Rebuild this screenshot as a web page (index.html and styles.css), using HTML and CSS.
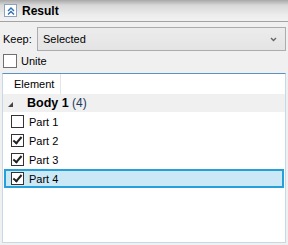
FILE: index.html
```html
<!DOCTYPE html>
<html lang="en">

<head>
    <meta charset="UTF-8">
    <title>Result</title>
    <link rel="stylesheet" href="styles.css">
</head>

<body>
    <div class="panel">
        <div class="panel-head">
            <span class="collapse-btn">
                <svg width="10" height="10" viewBox="0 0 10 10">
                    <path d="M2 5 L5 2 L8 5 M2 8.5 L5 5.5 L8 8.5" fill="none" stroke="#2d6db5" stroke-width="1.4" />
                </svg>
            </span>
            <span class="panel-title">Result</span>
        </div>

        <div class="keep-row">
            <label for="keep">Keep:</label>
            <div class="combo" id="keep">
                <span>Selected</span>
                <svg class="combo-arrow" width="7" height="5" viewBox="0 0 7 5">
                    <path d="M1 1 L3.5 3.5 L6 1" fill="none" stroke="#666" stroke-width="1.4" />
                </svg>
            </div>
        </div>

        <div class="unite-row">
            <span class="check light"></span>
            <span>Unite</span>
        </div>

        <div class="tree">
            <div class="tree-head">
                <div class="col">Element</div>
            </div>
            <div class="group">
                <span class="expander"></span>
                <b>Body 1</b>&nbsp;<span class="count">(4)</span>
            </div>
            <div class="item">
                <span class="check"></span>
                <span>Part 1</span>
            </div>
            <div class="item">
                <span class="check on"></span>
                <span>Part 2</span>
            </div>
            <div class="item">
                <span class="check on"></span>
                <span>Part 3</span>
            </div>
            <div class="item selected">
                <span class="check on"></span>
                <span>Part 4</span>
            </div>
        </div>
    </div>
</body>

</html>
```

FILE: styles.css
```css
body {
    margin: 0;
    background: #f0f0f0;
    font-family: "Liberation Sans", Arial, sans-serif;
    font-size: 11px;
    color: #000;
}

.panel {
    width: 288px;
    height: 245px;
    display: flex;
    flex-direction: column;
    overflow: hidden;
}

.panel-head {
    height: 21px;
    border-bottom: 1px solid #a3a3a3;
    background: linear-gradient(#a8a8a8, #d8d8d8 25%, #ececec 70%, #f2f2f2);
    display: flex;
    align-items: center;
    padding-left: 4px;
}

.collapse-btn {
    width: 11px;
    height: 11px;
    border: 1px solid #8da3bd;
    background: #fff;
    display: flex;
    align-items: center;
    justify-content: center;
}

.panel-title {
    font-weight: bold;
    font-size: 12px;
    margin-left: 5px;
}

.keep-row {
    display: flex;
    align-items: center;
    margin-top: 5px;
    padding-left: 3px;
    padding-right: 2px;
}

.keep-row label {
    width: 34px;
}

.combo {
    flex: 1;
    height: 22px;
    border: 1px solid #acacac;
    background: linear-gradient(#ececec, #e4e4e4);
    display: flex;
    align-items: center;
    padding-left: 5px;
    padding-right: 8px;
}

.combo span {
    flex: 1;
}

.unite-row {
    display: flex;
    align-items: center;
    margin-top: 3px;
    padding-left: 3px;
    height: 14px;
}

.check {
    width: 11px;
    height: 11px;
    border: 1px solid #333;
    background: #fff;
    margin-right: 5px;
    position: relative;
    flex: none;
}

.check.light {
    border-color: #707070;
    width: 12px;
    height: 12px;
    margin-right: 4px;
}

.check.on::after {
    content: "";
    position: absolute;
    left: 3px;
    top: 0px;
    width: 3px;
    height: 7px;
    border-right: 2px solid #222;
    border-bottom: 2px solid #222;
    transform: rotate(40deg);
}

.tree {
    margin: 5px 2px 2px 2px;
    flex: 1;
    border: 1px solid #c5d9ea;
    border-top-color: #5b91c4;
    background: #fff;
}

.tree-head {
    height: 20px;
    display: flex;
    background: #fff;
}

.col {
    width: 46px;
    padding-left: 11px;
    border-right: 1px solid #e5e5e5;
    display: flex;
    align-items: center;
}

.group {
    height: 18px;
    background: #f0f0f0;
    display: flex;
    align-items: center;
    padding-left: 5px;
    font-size: 12px;
}

.group b {
    font-size: 12.5px;
}

.count {
    color: #1c3a5e;
}

.expander {
    width: 0;
    height: 0;
    border-left: 5px solid transparent;
    border-bottom: 5px solid #444;
    margin-right: 14px;
    margin-top: 2px;
}

.item {
    height: 19px;
    display: flex;
    align-items: center;
    padding-left: 6px;
    border: 1px solid transparent;
    box-sizing: border-box;
    margin: 0 1px;
}

.item.selected {
    background: #cbe8f6;
    border: 2px solid #26a0da;
    padding-left: 5px;
}
```
